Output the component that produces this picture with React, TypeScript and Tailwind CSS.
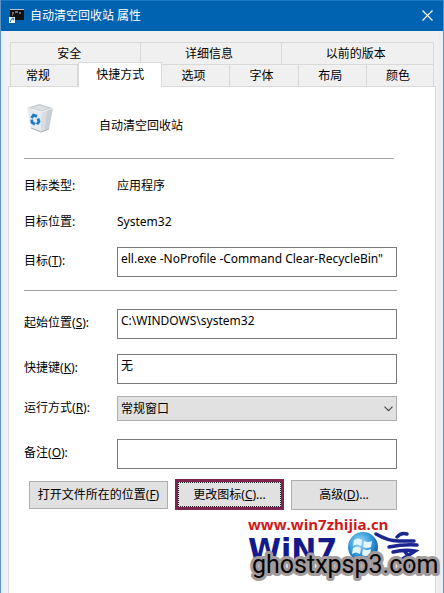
import type { ReactNode } from "react";

interface Tab {
  label: string;
  active?: boolean;
  first?: boolean;
}

const backTabs: Tab[] = [
  { label: "安全", first: true },
  { label: "详细信息" },
  { label: "以前的版本" },
];

const frontTabs: Tab[] = [
  { label: "常规", first: true },
  { label: "快捷方式", active: true },
  { label: "选项" },
  { label: "字体" },
  { label: "布局" },
  { label: "颜色" },
];

const inputClass =
  "h-[30px] w-full min-w-0 border border-[#7a7a7a] bg-white px-[3px] pb-2 font-['Noto_Sans','Noto_Sans_CJK_SC',sans-serif] text-xs outline-none";

const buttonClass =
  "whitespace-nowrap border border-[#adadad] bg-[#e1e1e1] text-center text-xs";

/* ── Icons ─────────────────────────────────────────── */
function ConsoleIcon() {
  return (
    <svg width="16" height="16" viewBox="0 0 16 16" aria-hidden="true">
      <rect x="1" y="1" width="14" height="11" fill="#101010" />
      <rect x="1" y="1" width="14" height="1" fill="#b9c3cb" />
      <path d="M3 5h2M6 4h3M10 5h2M3 7h1" stroke="#c8c8c8" strokeWidth="1" />
      <rect x="0" y="9" width="6" height="6" fill="#f4f8fc" />
      <path d="M1.5 14c0-2 .8-3 2.5-3M2.5 10.2h2.2v2.2" fill="none" stroke="#1d6fb8" strokeWidth="1" />
    </svg>
  );
}

function RecycleBinIcon() {
  return (
    <svg width="28" height="32" viewBox="0 0 28 32" aria-hidden="true">
      <path d="M0 4 12 0l14 4-11 4z" fill="#c6cbd0" />
      <path d="M4 4 12 1.500l10 2.500-7 2.500z" fill="#dde0e3" />
      <path d="M0 4l15 4-1 20-10-4z" fill="#e6e9ee" />
      <path d="M15 8l11-4-4 21-8 3z" fill="#c9ced5" />
      <path d="M15 8l5-2-2 20-4 2z" fill="#d9dde2" />
      <path d="M0 4l15 4 11-4" fill="none" stroke="#f1f2f4" strokeWidth="1" />
      <path d="M4 24l10 4 8-3" fill="none" stroke="#a3abb3" strokeWidth="1" />
      <g fill="none" stroke="#1a7cc9" strokeWidth="2.800">
        <path d="M4.500 14 6.500 11.200l3.500 1.200" />
        <path d="M11 14.500l1 3-2 2.800" />
        <path d="M8 20.200l-3-1.800-.2-2.700" />
      </g>
    </svg>
  );
}

/* ── Form pieces ───────────────────────────────────── */
interface FieldLabelProps {
  htmlFor: string;
  text: string;
  hotkey: string;
}

function FieldLabel({ htmlFor, text, hotkey }: FieldLabelProps) {
  return (
    <label htmlFor={htmlFor} className="w-[93px] shrink-0 pb-0.5">
      {text}(<u>{hotkey}</u>):
    </label>
  );
}

function Row({ className, children }: { className: string; children: ReactNode }) {
  return <div className={`flex items-center ${className}`}>{children}</div>;
}

function TabButton({ label, active, first }: Tab) {
  return (
    <button
      type="button"
      role="tab"
      aria-selected={Boolean(active)}
      className={
        active
          ? "relative -mt-0.5 -mb-px border-x border-t border-[#d9d9d9] bg-white text-center"
          : `border-t border-r border-[#d9d9d9] bg-[#f0f0f0] text-center ${first ? "pr-3" : "pr-1"}`
      }
    >
      {label}
    </button>
  );
}

function Watermark() {
  return (
    <div className="-mr-10 mt-1 ml-auto w-[189px]">
      <a
        href="#site"
        className="block font-['Open_Sans',sans-serif] text-[15px] leading-5 font-bold text-[#d01818]"
      >
        www.win7zhijia.cn
      </a>
      <svg
        className="block w-full overflow-visible"
        height="56"
        viewBox="0 0 189 56"
        role="img"
        aria-label="WiN7 ghostxpsp3.com"
      >
        <defs>
          <radialGradient id="orb" cx="0.4" cy="0.35" r="0.7">
            <stop offset="0" stopColor="#9fdcf8" />
            <stop offset="0.6" stopColor="#2f93d8" />
            <stop offset="1" stopColor="#12539c" />
          </radialGradient>
        </defs>
        <text x="0" y="26" fontFamily="DejaVu Sans" fontWeight="700" fontSize="30" fill="#121a8c">
          WiN7
        </text>
        <circle cx="115" cy="13" r="15" fill="url(#orb)" />
        <path
          d="M106 6q4-3 8 0l-1 6q-4-3-8 0zM116 7q4 2 8 0l-1 6q-4 2-8 0zM105 14q4-3 8 0l-1 6q-4-3-8 0zM115 15q4 2 8 0l-1 6q-4 2-8 0z"
          fill="#e6f6ff"
        />
        <path
          d="M128 0q12 7 22 7h16M141 13q15-3 28-2M149 3q4-5 10-3M145 18q12-3 22-1l-14 9M157 18q8 7 4 17M160 24l9 6"
          fill="none"
          stroke="#1b2691"
          strokeWidth="3.500"
          strokeLinecap="round"
        />
        <text
          x="4"
          y="39"
          fontFamily="Roboto"
          fontSize="25"
          fill="#050505"
          stroke="#a39b9b"
          strokeWidth="6"
          strokeLinejoin="round"
          paintOrder="stroke"
        >
          ghostxpsp3.com
        </text>
      </svg>
    </div>
  );
}

export default function App() {
  return (
    <main className="flex min-h-screen flex-col overflow-hidden border-x border-[#5f93c4] bg-[#f0f0f0] font-['Noto_Sans','Noto_Sans_CJK_SC',sans-serif] text-xs text-black">
      {/* ── Title bar ─────────────────────────────────── */}
      <header className="flex h-[31px] items-center border-t border-[#1a78c8] bg-[#0063b1] pr-2 pl-2 text-white">
        <ConsoleIcon />
        <h1 className="ml-[5px] flex-1">自动清空回收站 属性</h1>
        <button type="button" aria-label="关闭" className="p-0.5 pb-1">
          <svg width="11" height="11" viewBox="0 0 11 11" aria-hidden="true">
            <path d="M.5.5l10 10M10.500.5l-10 10" stroke="#fff" strokeWidth="1.200" />
          </svg>
        </button>
      </header>

      <div className="flex flex-1 flex-col border-x-4 border-[#e6eff8] px-[3px] pt-[11px]">
        {/* ── Tabs ────────────────────────────────────── */}
        <div role="tablist" className="mx-0.5 border-l border-[#d9d9d9]">
          <div className="grid h-[22px] grid-cols-[129fr_141fr_151fr]">
            {backTabs.map((tab) => (
              <TabButton key={tab.label} {...tab} />
            ))}
          </div>
          <div className="grid h-[22px] grid-cols-[67fr_84fr_67fr_69fr_68fr_67fr]">
            {frontTabs.map((tab) => (
              <TabButton key={tab.label} {...tab} />
            ))}
          </div>
        </div>

        {/* ── Shortcut page ───────────────────────────── */}
        <form className="flex flex-1 flex-col border-x border-t border-[#d9d9d9] bg-white pr-[38px] pl-[15px]">
          <div className="mt-[17px] flex items-center pl-[3px]">
            <RecycleBinIcon />
            <span className="ml-11 pt-3">自动清空回收站</span>
          </div>
          <hr className="mt-[22px] mr-[3px] border-[#a0a0a0]" />

          <Row className="mt-[17px] h-5">
            <span className="w-[93px] shrink-0">目标类型:</span>
            <span>应用程序</span>
          </Row>
          <Row className="mt-4 h-5">
            <span className="w-[93px] shrink-0">目标位置:</span>
            <span>System32</span>
          </Row>
          <Row className="mt-[15px]">
            <FieldLabel htmlFor="target" text="目标" hotkey="T" />
            <input
              id="target"
              className={inputClass}
              defaultValue={'ell.exe -NoProfile -Command Clear-RecycleBin"'}
            />
          </Row>
          <hr className="mt-[13px] border-[#a0a0a0]" />

          <Row className="mt-[18px]">
            <FieldLabel htmlFor="start" text="起始位置" hotkey="S" />
            <input id="start" className={inputClass} defaultValue="C:\WINDOWS\system32" />
          </Row>
          <Row className="mt-[15px]">
            <FieldLabel htmlFor="hotkey" text="快捷键" hotkey="K" />
            <input id="hotkey" className={inputClass} defaultValue="无" />
          </Row>
          <Row className="mt-3">
            <FieldLabel htmlFor="run" text="运行方式" hotkey="R" />
            <div className="relative flex-1">
              <select
                id="run"
                className="block h-[25px] w-full appearance-none border border-[#adadad] bg-[#e1e1e1] px-[3px] text-xs outline-none"
              >
                <option>常规窗口</option>
              </select>
              <svg
                className="pointer-events-none absolute top-2.5 right-1"
                width="9"
                height="6"
                viewBox="0 0 9 6"
                aria-hidden="true"
              >
                <path d="M.5.7l4 4 4-4" fill="none" stroke="#444" strokeWidth="1.100" />
              </svg>
            </div>
          </Row>
          <Row className="mt-[18px]">
            <FieldLabel htmlFor="comment" text="备注" hotkey="O" />
            <input id="comment" className={inputClass} />
          </Row>

          {/* ── Buttons ───────────────────────────────── */}
          <div className="mt-2.5 grid grid-cols-[139fr_109fr_106fr] items-center gap-[7px] pl-[5px]">
            <button type="button" className={`${buttonClass} h-7`}>
              打开文件所在的位置(<u>F</u>)
            </button>
            <button
              type="button"
              className="h-[31px] border-3 border-[#7d2450] bg-[#e1e1e1] text-xs whitespace-nowrap outline-1 -outline-offset-4 outline-dotted outline-[#202020]"
            >
              更改图标(<u>C</u>)...
            </button>
            <button type="button" className={`${buttonClass} h-[30px]`}>
              高级(<u>D</u>)...
            </button>
          </div>

          <Watermark />
        </form>
      </div>
    </main>
  );
}
